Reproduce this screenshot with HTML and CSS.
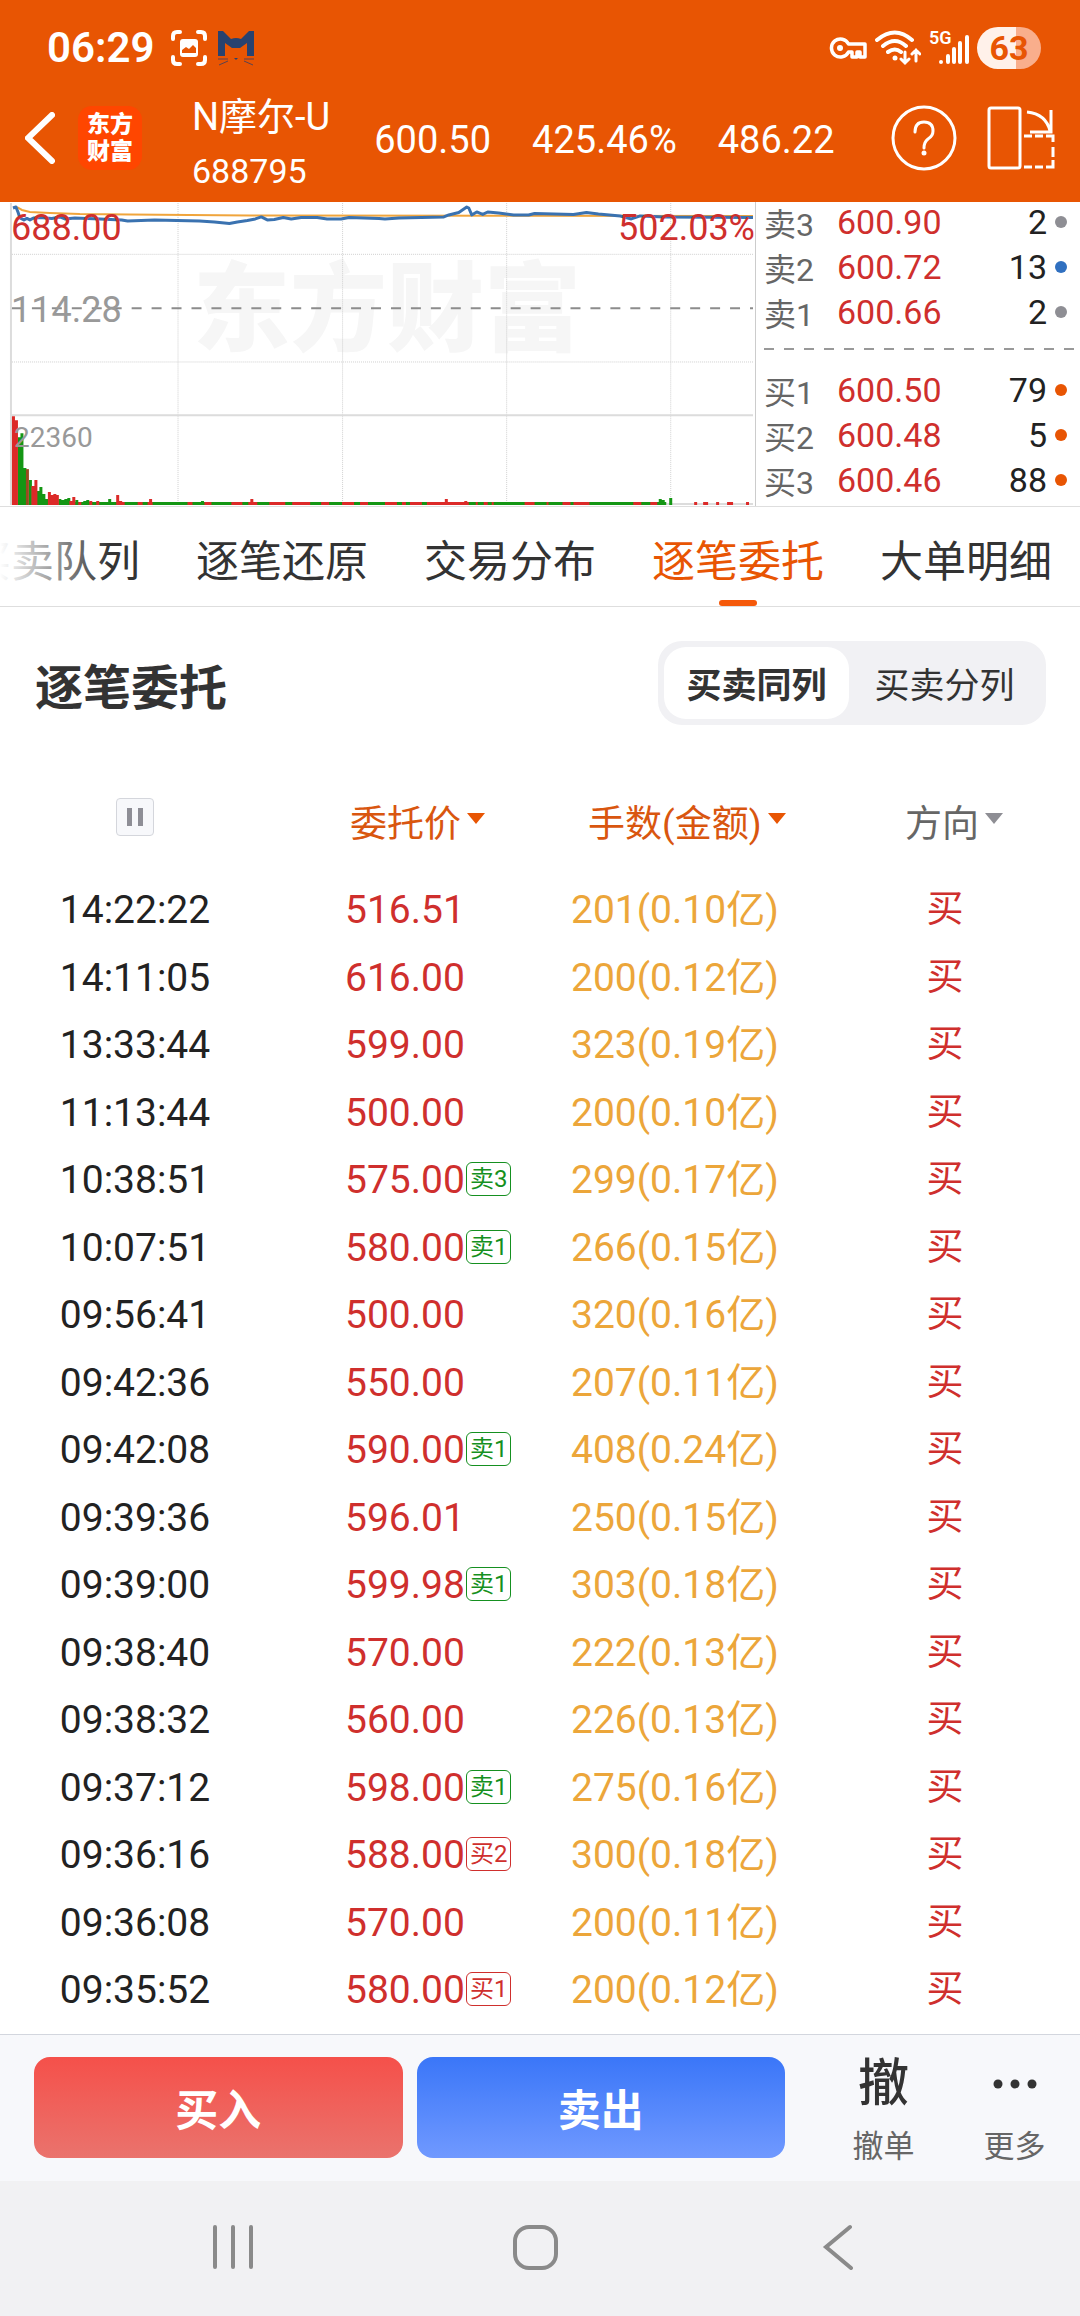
FILE: index.html
```html
<!DOCTYPE html>
<html lang="zh-CN">
<head>
    <meta charset="UTF-8">
    <meta name="viewport" content="width=device-width, initial-scale=1.0">
    <title>N摩尔-U 688795</title>
    <link rel="stylesheet" href="styles.css">
</head>
<body>
    <header class="top">
        <div class="status-bar">
            <span class="clock">06:29</span>
            <svg class="status-shot" width="36" height="36" viewBox="0 0 36 36" fill="none" stroke="#fff" stroke-width="4" stroke-linecap="round">
                <path d="M2 9V6Q2 2 6 2H9M27 2H30Q34 2 34 6V9M34 27V30Q34 34 30 34H27M9 34H6Q2 34 2 30V27"/>
                <rect x="9" y="9" width="18" height="18" rx="3" fill="#fff" stroke="none"/>
                <path d="M11 23V20L15 17L18 19L22 15L25 18V23Z" fill="#e85503" stroke="none"/>
            </svg>
            <svg width="36" height="36" viewBox="0 0 36 36">
                <path d="M0 1H5L13 9Q18 7 23 9L31 1H36V26H29V13L22 18H14L7 13V26H0Z" fill="#28426f"/>
                <path d="M16 28H20L18 30Z" fill="#28426f"/>
                <path d="M0 29H10M10 31L1 35M26 29H36M26 31L35 35" stroke="#5a4250" stroke-width="1" fill="none"/>
            </svg>
            <div class="status-right">
                <svg width="38" height="24" viewBox="0 0 38 24" fill="none" stroke="#fff" stroke-width="4">
                    <path d="M19.5 8H36V21H31V16H28V21H23V16H19.5A9 9 0 1 1 19.5 8Z" stroke-linejoin="round" stroke-width="3.5"/>
                    <circle cx="11" cy="12" r="3" fill="#fff" stroke="none"/>
                </svg>
                <svg width="46" height="36" viewBox="0 0 46 36" fill="none" stroke="#fff" stroke-width="4" stroke-linecap="round">
                    <path d="M2 10Q20 -5 37 10M8 16Q20 6 31 16M13 22Q20 17 26 22"/>
                    <circle cx="20" cy="28" r="2.5" fill="#fff" stroke="none"/>
                    <path d="M30 22V33M26 29L30 33L34 29M41 31V20M37 24L41 20L45 24" stroke-width="3"/>
                </svg>
                <div class="signal">
                    <span class="signal-label">5G</span>
                    <svg width="40" height="36" viewBox="0 0 40 36" stroke="#fff" stroke-width="4" stroke-linecap="round">
                        <path d="M12 32V32M19 26V32M25 19V32M31 13V32M38 7V32"/>
                    </svg>
                </div>
                <span class="battery">63</span>
            </div>
        </div>
        <div class="title-bar">
            <button class="icon-button" aria-label="返回">
                <svg width="30" height="52" viewBox="0 0 30 52" fill="none" stroke="#fff" stroke-width="6" stroke-linecap="round">
                    <path d="M27 3L3 26L27 49"/>
                </svg>
            </button>
            <span class="logo">东方<br>财富</span>
            <div class="stock">
                <h1 class="stock-name">N摩尔-U</h1>
                <span class="stock-code">688795</span>
            </div>
            <div class="quotes">
                <span>600.50</span>
                <span>425.46%</span>
                <span>486.22</span>
            </div>
            <div class="title-actions">
                <button class="icon-button" aria-label="帮助">
                    <svg width="66" height="66" viewBox="0 0 66 66" fill="none" stroke="#fff" stroke-width="3">
                        <circle cx="33" cy="33" r="31"/>
                        <path d="M24 27Q24 17 33 17Q42 17 42 26Q42 31 37 34Q33 37 33 43" stroke-linecap="round"/>
                        <circle cx="33" cy="48" r="2.5" fill="#fff" stroke="none"/>
                    </svg>
                </button>
                <button class="icon-button" aria-label="横屏">
                    <svg width="68" height="64" viewBox="0 0 68 64" fill="none" stroke="#fff" stroke-width="3">
                        <rect x="2" y="2" width="31" height="60" rx="2"/>
                        <path d="M40 6Q59 8 63 25M64 4V26H43"/>
                        <path d="M37 30H45M48 30H56M59 30H66V36M66 41V51M66 54V61H59M56 61H48M45 61H37"/>
                    </svg>
                </button>
            </div>
        </div>
    </header>

    <section class="market">
        <div class="chart">
            <span class="watermark">东方财富</span>
            <svg class="chart-canvas" viewBox="0 0 757 305" preserveAspectRatio="none" fill="none">
                <!-- grid -->
                <g stroke="#d0d0d0" stroke-dasharray="1 1">
                    <path d="M178.5 1V304M343.5 1V304M508 1V304M672.5 1V304M12 52.5H755M12 160.5H755"/>
                </g>
                <path d="M11 1V304M11 214H755" stroke="#dcdcdc" stroke-width="2"/>
                <path d="M12 303H755" stroke="#dcdcdc" stroke-width="2"/>
                <path d="M12 106.5H755" stroke="#8c8c8c" stroke-width="2" stroke-dasharray="10 10"/>
                <!-- average and price -->
                <path d="M17 5L22 8L30 10L50 11L80 12L130 12.5L250 13.5L755 14" stroke="#f0a53c" stroke-width="2"/>
                <path d="M13 6L16 5L18 10L20 16L24 18L27 16.5L30 18L34 16L40 15.5L52 16.5L60 15L65 17L75 16L100 17L122 18L128 19L155 18L200 19L215 20L230 21.5L238 20L248 18.5L256 17L262 15L268 18L275 17.5L284 15.5L292 17L302 15.5L318 15.5L328 17L342 17L350 15.5L380 16.5L386 17L400 16L445 15L450 13L460 10.5L468 5L470 6L473 13L478 10L484 12.5L489 10L500 11L515 13L530 13L536 11.5L575 12.5L588 10.5L600 12L622 14L633 17L642 14L655 14.5L665 15L755 15.5" stroke="#3a72b0" stroke-width="3" stroke-linejoin="round"/>
                <!-- volume -->
                <g stroke="#149614" stroke-width="3">
                    <path d="M19.5 304V236M22 304V232M25 304V267M30.5 304V279M38.5 304V290M41 304V286M44 304V293M47 304V298M60 304V298M63 304V299M66 304V298M69 304V297M77 304V299M85 304V300M88 304V299M110 304V298M203 304V300M662 304V298M665 304V299M672.5 304V297"/>
                    <path d="M72 302.5H668"/>
                </g>
                <g stroke="#dc2a28" stroke-width="3">
                    <path d="M13.5 304V215M16.5 304V219M33 304V285M36 304V279M49.5 304V291M52 304V294M55 304V293M57.5 304V294M71 304V300M74 304V296M80 304V301M91 304V300M98 304V300M118 304V294M121 304V300M151 304V298M252.5 304V298M447.5 304V298M467 304V300"/>
                    <path d="M27.5 304V268" stroke="#9a4a20"/>
                    <path d="M121 302.5H125M138 302.5H143M148 302.5H153M188 302.5H193M205 302.5H212M232 302.5H243M249 302.5H258M270 302.5H286M293 302.5H311M322 302.5H330M343 302.5H355M361 302.5H369M386 302.5H398M403 302.5H407M411 302.5H423M428 302.5H470M477 302.5H479M485 302.5H489M493 302.5H495M526 302.5H536M548 302.5H550M564 302.5H572M575 302.5H591M635 302.5H643M652 302.5H659M696 302.5H699M705 302.5H710M718 302.5H721M729 302.5H735M748 302.5H751"/>
                </g>
            </svg>
            <span class="chart-label chart-high">688.00</span>
            <span class="chart-label chart-percent">502.03%</span>
            <span class="chart-label chart-base">114.28</span>
            <span class="chart-label chart-volume">22360</span>
        </div>
        <div class="depth">
            <div class="depth-group">
                <div class="depth-row"><span class="depth-name">卖3</span><span class="depth-price">600.90</span><span class="depth-count">2</span><i class="dot"></i></div>
                <div class="depth-row"><span class="depth-name">卖2</span><span class="depth-price">600.72</span><span class="depth-count">13</span><i class="dot dot-blue"></i></div>
                <div class="depth-row"><span class="depth-name">卖1</span><span class="depth-price">600.66</span><span class="depth-count">2</span><i class="dot"></i></div>
            </div>
            <div class="depth-divider"></div>
            <div class="depth-group">
                <div class="depth-row"><span class="depth-name">买1</span><span class="depth-price">600.50</span><span class="depth-count">79</span><i class="dot dot-orange"></i></div>
                <div class="depth-row"><span class="depth-name">买2</span><span class="depth-price">600.48</span><span class="depth-count">5</span><i class="dot dot-orange"></i></div>
                <div class="depth-row"><span class="depth-name">买3</span><span class="depth-price">600.46</span><span class="depth-count">88</span><i class="dot dot-orange"></i></div>
            </div>
        </div>
    </section>

    <nav class="tabs">
        <a class="tab" href="#">买卖队列</a>
        <a class="tab" href="#">逐笔还原</a>
        <a class="tab" href="#">交易分布</a>
        <a class="tab tab-active" href="#">逐笔委托</a>
        <a class="tab" href="#">大单明细</a>
    </nav>

    <main class="orders">
        <div class="orders-head">
            <h2 class="orders-title">逐笔委托</h2>
            <div class="segment">
                <button class="segment-item segment-active">买卖同列</button>
                <button class="segment-item">买卖分列</button>
            </div>
        </div>
        <table class="order-table">
            <thead>
                <tr>
                    <th class="col-time">
                        <button class="pause" aria-label="暂停"><svg width="18" height="18" viewBox="0 0 18 18"><path d="M1 0H6V18H1ZM12 0H17V18H12Z" fill="#8e8e96"/></svg></button>
                    </th>
                    <th class="col-price"><button class="sort sort-on">委托价</button></th>
                    <th class="col-amount"><button class="sort sort-on">手数(金额)</button></th>
                    <th class="col-side"><button class="sort">方向</button></th>
                </tr>
            </thead>
            <tbody>
                <tr><td class="col-time">14:22:22</td><td class="col-price">516.51</td><td class="col-amount">201(0.10亿)</td><td class="col-side">买</td></tr>
                <tr><td class="col-time">14:11:05</td><td class="col-price">616.00</td><td class="col-amount">200(0.12亿)</td><td class="col-side">买</td></tr>
                <tr><td class="col-time">13:33:44</td><td class="col-price">599.00</td><td class="col-amount">323(0.19亿)</td><td class="col-side">买</td></tr>
                <tr><td class="col-time">11:13:44</td><td class="col-price">500.00</td><td class="col-amount">200(0.10亿)</td><td class="col-side">买</td></tr>
                <tr><td class="col-time">10:38:51</td><td class="col-price">575.00<span class="tag">卖3</span></td><td class="col-amount">299(0.17亿)</td><td class="col-side">买</td></tr>
                <tr><td class="col-time">10:07:51</td><td class="col-price">580.00<span class="tag">卖1</span></td><td class="col-amount">266(0.15亿)</td><td class="col-side">买</td></tr>
                <tr><td class="col-time">09:56:41</td><td class="col-price">500.00</td><td class="col-amount">320(0.16亿)</td><td class="col-side">买</td></tr>
                <tr><td class="col-time">09:42:36</td><td class="col-price">550.00</td><td class="col-amount">207(0.11亿)</td><td class="col-side">买</td></tr>
                <tr><td class="col-time">09:42:08</td><td class="col-price">590.00<span class="tag">卖1</span></td><td class="col-amount">408(0.24亿)</td><td class="col-side">买</td></tr>
                <tr><td class="col-time">09:39:36</td><td class="col-price">596.01</td><td class="col-amount">250(0.15亿)</td><td class="col-side">买</td></tr>
                <tr><td class="col-time">09:39:00</td><td class="col-price">599.98<span class="tag">卖1</span></td><td class="col-amount">303(0.18亿)</td><td class="col-side">买</td></tr>
                <tr><td class="col-time">09:38:40</td><td class="col-price">570.00</td><td class="col-amount">222(0.13亿)</td><td class="col-side">买</td></tr>
                <tr><td class="col-time">09:38:32</td><td class="col-price">560.00</td><td class="col-amount">226(0.13亿)</td><td class="col-side">买</td></tr>
                <tr><td class="col-time">09:37:12</td><td class="col-price">598.00<span class="tag">卖1</span></td><td class="col-amount">275(0.16亿)</td><td class="col-side">买</td></tr>
                <tr><td class="col-time">09:36:16</td><td class="col-price">588.00<span class="tag tag-buy">买2</span></td><td class="col-amount">300(0.18亿)</td><td class="col-side">买</td></tr>
                <tr><td class="col-time">09:36:08</td><td class="col-price">570.00</td><td class="col-amount">200(0.11亿)</td><td class="col-side">买</td></tr>
                <tr><td class="col-time">09:35:52</td><td class="col-price">580.00<span class="tag tag-buy">买1</span></td><td class="col-amount">200(0.12亿)</td><td class="col-side">买</td></tr>
            </tbody>
        </table>
    </main>

    <footer class="bottom">
        <div class="trade-bar">
            <div class="trade-buttons">
                <button class="trade trade-buy">买入</button>
                <button class="trade trade-sell">卖出</button>
            </div>
            <button class="tool"><span class="tool-icon">撤</span>撤单</button>
            <button class="tool">
                <span class="tool-icon">
                    <svg width="46" height="10" viewBox="0 0 46 10" fill="#333"><circle cx="6" cy="5" r="4.5"/><circle cx="23" cy="5" r="4.5"/><circle cx="40" cy="5" r="4.5"/></svg>
                </span>更多
            </button>
        </div>
        <div class="system-nav">
            <button class="icon-button" aria-label="最近任务">
                <svg width="46" height="46" viewBox="0 0 46 46" stroke="#8a8a8a" stroke-width="4" stroke-linecap="round">
                    <path d="M5 3V43M23 3V43M41 3V43"/>
                </svg>
            </button>
            <button class="icon-button" aria-label="主屏幕">
                <svg width="46" height="46" viewBox="0 0 46 46" fill="none" stroke="#8a8a8a" stroke-width="4">
                    <rect x="3" y="3" width="41" height="41" rx="14"/>
                </svg>
            </button>
            <button class="icon-button" aria-label="返回上一页">
                <svg width="46" height="46" viewBox="0 0 46 46" fill="none" stroke="#8a8a8a" stroke-width="4" stroke-linecap="round">
                    <path d="M35 3L11 23L36 44"/>
                </svg>
            </button>
        </div>
    </footer>
</body>
</html>
```
FILE: styles.css
```css
:root {
    --brand: #e85503;
    --red: #cf2f2d;
    --green: #159020;
    --gold: #eca63a;
    --text: #333333;
    --muted: #666666;
    --line: #dedede;
}

* {
    box-sizing: border-box;
}

body {
    margin: 0;
    min-height: 100vh;
    display: flex;
    flex-direction: column;
    background: #ffffff;
    color: var(--text);
    font-family: Roboto, "Noto Sans CJK SC", sans-serif;
}

button {
    padding: 0;
    border: none;
    background: none;
    color: inherit;
    font: inherit;
    cursor: pointer;
}

svg {
    display: block;
}

h1, h2 {
    margin: 0;
    font-weight: 400;
}

/* === Header === */
.top {
    background: var(--brand);
    color: #ffffff;
}

.status-bar {
    display: flex;
    align-items: center;
    height: 74px;
    padding: 22px 39px 0 47px;
}

.clock {
    font-size: 42px;
    line-height: 48px;
    font-weight: 600;
}

.status-shot {
    margin: 0 11px 0 17px;
}

.status-right {
    display: flex;
    align-items: center;
    gap: 8px;
    margin-left: auto;
}

.signal {
    position: relative;
}

.signal-label {
    position: absolute;
    top: 0;
    left: 0;
    font-size: 18px;
    line-height: 16px;
    font-weight: 600;
}

.battery {
    width: 64px;
    border-radius: 21px;
    background: linear-gradient(90deg, #fff1ea 61%, #f9ae8c 61%);
    color: var(--brand);
    font-size: 34px;
    line-height: 42px;
    font-weight: 700;
    text-align: center;
}

.title-bar {
    display: flex;
    align-items: center;
    height: 128px;
    padding: 0 25px 0 25px;
}

.logo {
    width: 64px;
    height: 64px;
    margin: 0 50px 0 23px;
    padding-top: 5px;
    border-radius: 14px;
    background: #ff4600;
    font-size: 23px;
    line-height: 27px;
    font-weight: 900;
    text-align: center;
}

.stock {
    display: flex;
    flex-direction: column;
    padding-top: 14px;
}

.stock-name {
    font-size: 38px;
    line-height: 52px;
}

.stock-code {
    font-size: 34px;
    line-height: 56px;
}

.quotes {
    display: flex;
    gap: 41px;
    margin-left: 44px;
    padding-top: 4px;
    font-size: 38px;
}

.title-actions {
    display: flex;
    align-items: center;
    gap: 30px;
    margin-left: auto;
}

/* === Chart and depth === */
.market {
    display: flex;
    border-bottom: 1px solid var(--line);
}

.chart {
    position: relative;
    flex: 1;
    border-right: 1px solid #cccccc;
}

.chart-canvas {
    position: relative;
    width: 100%;
    height: 304px;
}

.chart-label {
    position: absolute;
    left: 11px;
    color: #999999;
    font-size: 36px;
    line-height: 42px;
}

.chart-high {
    top: 5px;
    color: var(--red);
}

.chart-percent {
    top: 5px;
    left: auto;
    right: 0;
    color: var(--red);
}

.chart-base {
    top: 87px;
}

.chart-volume {
    top: 215px;
    left: 14px;
    font-size: 28px;
}

.watermark {
    position: absolute;
    top: 53px;
    left: 193px;
    color: #f6f6f6;
    font-size: 97px;
    line-height: 110px;
    font-weight: 900;
}

.depth {
    width: 30%;
    padding-left: 8px;
}

.depth-group {
    display: flex;
    flex-direction: column;
    gap: 5px;
}

.depth-row {
    display: flex;
    align-items: center;
    height: 40px;
    padding-right: 13px;
    font-size: 34px;
    line-height: 40px;
}

.depth-name {
    width: 73px;
    padding-top: 5px;
    color: var(--muted);
    font-size: 32px;
}

.depth-price {
    color: var(--red);
}

.depth-count {
    margin-left: auto;
    color: #222222;
}

.dot {
    width: 12px;
    height: 12px;
    margin-left: 8px;
    border-radius: 50%;
    background: #8e8e94;
}

.dot-blue {
    background: #3070c0;
}

.dot-orange {
    background: var(--brand);
}

.depth-divider {
    height: 2px;
    margin: 16px 6px 20px 0;
    background: repeating-linear-gradient(90deg, #999999 0 10px, transparent 10px 20px);
}

/* === Tabs === */
.tabs {
    position: relative;
    display: flex;
    justify-content: flex-end;
    gap: 56px;
    padding-right: 28px;
    border-bottom: 1px solid var(--line);
    overflow: hidden;
}

.tabs::before {
    content: "";
    position: absolute;
    inset: 0 auto 0 0;
    width: 110px;
    background: linear-gradient(90deg, #ffffff, rgba(255, 255, 255, 0));
    z-index: 1;
}

.tab {
    position: relative;
    flex: none;
    padding-top: 11px;
    color: var(--text);
    font-size: 43px;
    line-height: 88px;
    text-decoration: none;
}

.tab-active {
    color: var(--brand);
}

.tab-active::after {
    content: "";
    position: absolute;
    left: 50%;
    bottom: 0;
    width: 38px;
    height: 6px;
    margin-left: -19px;
    border-radius: 3px;
    background: #f5590a;
}

/* === Orders === */
.orders {
    flex: 1;
}

.orders-head {
    display: flex;
    align-items: center;
    justify-content: space-between;
    padding: 34px 34px 40px 35px;
}

.orders-title {
    padding-top: 2px;
    font-size: 48px;
    font-weight: 700;
}

.segment {
    display: flex;
    padding: 6px;
    border-radius: 24px;
    background: #f1f1f4;
}

.segment-item {
    width: 191px;
    padding-top: 8px;
    border-radius: 22px;
    font-size: 35px;
    line-height: 64px;
}

.segment-active {
    width: 185px;
    background: #ffffff;
    font-weight: 700;
}

.order-table {
    width: 100%;
    border-collapse: collapse;
    table-layout: fixed;
    font-size: 39px;
}

.order-table th {
    height: 111px;
    padding: 0;
    font-size: 37px;
    font-weight: 400;
    text-align: left;
}

.order-table td {
    height: 67px;
    padding: 1px 0 0;
    line-height: 60px;
}

.order-table tr:nth-child(even) td {
    height: 68px;
}

.order-table .col-time,
.order-table .col-side {
    text-align: center;
}

td.col-time {
    color: #222222;
}

.order-table td.col-price {
    padding-left: 75px;
    color: var(--red);
}

.order-table td.col-amount {
    padding-left: 31px;
    color: var(--gold);
}

td.col-side {
    color: var(--red);
    font-size: 37px;
}

.order-table th.col-price {
    padding-left: 80px;
}

.order-table th.col-amount {
    padding-left: 48px;
}

.order-table th.col-side {
    padding-left: 18px;
}

.pause {
    display: inline-flex;
    align-items: center;
    justify-content: center;
    width: 38px;
    height: 38px;
    margin-bottom: 8px;
    border: 1px solid #d4d6dc;
    border-radius: 4px;
    background: #f7f8fb;
    vertical-align: middle;
}

.sort {
    display: inline-flex;
    align-items: center;
    gap: 6px;
    color: var(--muted);
    white-space: nowrap;
}

.sort::after {
    content: "";
    margin-bottom: 4px;
    border: 9px solid transparent;
    border-top: 11px solid #8e8e94;
    border-bottom: none;
}

.sort-on {
    color: #d9560f;
}

.sort-on::after {
    border-top-color: var(--brand);
}

.tag {
    display: inline-block;
    margin-left: 1px;
    padding: 0 3px;
    border: 1px solid var(--green);
    border-radius: 6px;
    color: var(--green);
    font-size: 24px;
    line-height: 32px;
    vertical-align: 6px;
}

.tag-buy {
    border-color: var(--red);
    color: var(--red);
}

/* === Bottom bars === */
.trade-bar {
    display: flex;
    align-items: center;
    height: 147px;
    padding-left: 34px;
    border-top: 1px solid #d3d6de;
    background: #f7f8fb;
}

.trade-buttons {
    display: flex;
    flex: 1;
    gap: 14px;
    margin-right: 33px;
    padding-bottom: 2px;
}

.trade {
    flex: 1;
    height: 101px;
    border-radius: 16px;
    color: #ffffff;
    font-size: 43px;
    font-weight: 700;
}

.trade-buy {
    background: linear-gradient(#f5504a, #ea736d);
}

.trade-sell {
    background: linear-gradient(#3a76f8, #7099ff);
}

.tool {
    width: 131px;
    padding-top: 4px;
    color: var(--muted);
    font-size: 31px;
    line-height: 40px;
}

.tool-icon {
    display: flex;
    align-items: center;
    justify-content: center;
    height: 62px;
    margin-bottom: 12px;
    color: var(--text);
    font-size: 51px;
    font-weight: 500;
}

.system-nav {
    display: flex;
    align-items: center;
    justify-content: space-around;
    height: 135px;
    padding: 0 91px 3px 82px;
    background: #f1f1f3;
}
```
